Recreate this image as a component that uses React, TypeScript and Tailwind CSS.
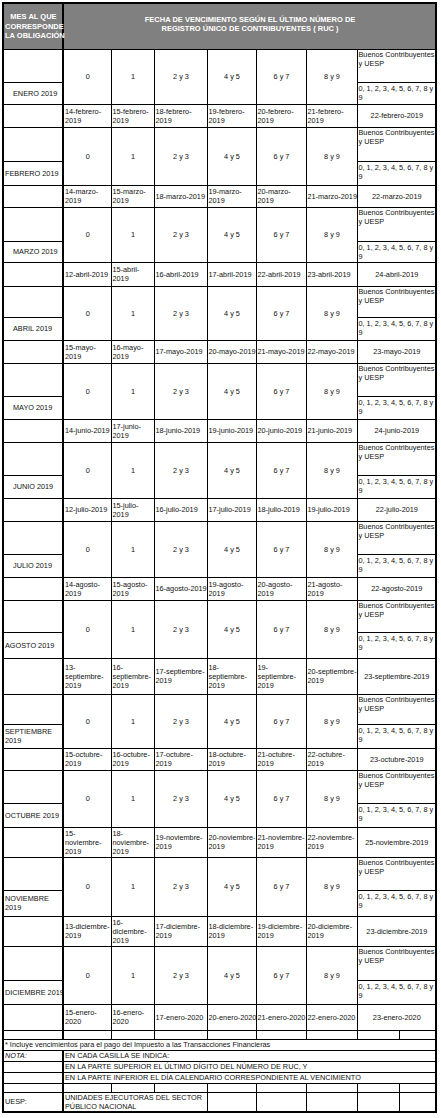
import React from "react";

type Month = {
  name: string;
  indent?: boolean;
  rows: [string, string, string];
  dates: string[];
  last: string;
};

// "|" marks where the reference breaks a line
const months: Month[] = [
  {
    name: "ENERO 2019",
    indent: true,
    rows: ["h-[33px]", "h-[22px]", "h-[23px]"],
    dates: ["14-febrero-|2019", "15-febrero-|2019", "18-febrero-|2019", "19-febrero-|2019", "20-febrero-|2019", "21-febrero-|2019"],
    last: "22-febrero-2019",
  },
  {
    name: "FEBRERO 2019",
    rows: ["h-[34px]", "h-[24px]", "h-[22px]"],
    dates: ["14-marzo-|2019", "15-marzo-|2019", "18-marzo-2019", "19-marzo-|2019", "20-marzo-|2019", "21-marzo-2019"],
    last: "22-marzo-2019",
  },
  {
    name: "MARZO 2019",
    indent: true,
    rows: ["h-[34px]", "h-[21px]", "h-[24px]"],
    dates: ["12-abril-2019", "15-abril-|2019", "16-abril-2019", "17-abril-2019", "22-abril-2019", "23-abril-2019"],
    last: "24-abril-2019",
  },
  {
    name: "ABRIL 2019",
    indent: true,
    rows: ["h-[31px]", "h-[23px]", "h-[23px]"],
    dates: ["15-mayo-|2019", "16-mayo-|2019", "17-mayo-2019", "20-mayo-2019", "21-mayo-2019", "22-mayo-2019"],
    last: "23-mayo-2019",
  },
  {
    name: "MAYO 2019",
    indent: true,
    rows: ["h-[33px]", "h-[23px]", "h-[23px]"],
    dates: ["14-junio-2019", "17-junio-|2019", "18-junio-2019", "19-junio-2019", "20-junio-2019", "21-junio-2019"],
    last: "24-junio-2019",
  },
  {
    name: "JUNIO 2019",
    indent: true,
    rows: ["h-[33px]", "h-[23px]", "h-[23px]"],
    dates: ["12-julio-2019", "15-julio-|2019", "16-julio-2019", "17-julio-2019", "18-julio-2019", "19-julio-2019"],
    last: "22-julio-2019",
  },
  {
    name: "JULIO 2019",
    indent: true,
    rows: ["h-[33px]", "h-[23px]", "h-[23px]"],
    dates: ["14-agosto-|2019", "15-agosto-|2019", "16-agosto-2019", "19-agosto-|2019", "20-agosto-|2019", "21-agosto-|2019"],
    last: "22-agosto-2019",
  },
  {
    name: "AGOSTO 2019",
    rows: ["h-[32px]", "h-[26px]", "h-[36px]"],
    dates: ["13-|septiembre-|2019", "16-|septiembre-|2019", "17-septiembre-|2019", "18-|septiembre-|2019", "19-|septiembre-|2019", "20-septiembre-|2019"],
    last: "23-septiembre-2019",
  },
  {
    name: "SEPTIEMBRE|2019",
    rows: ["h-[30px]", "h-[24px]", "h-[22px]"],
    dates: ["15-octubre-|2019", "16-octubre-|2019", "17-octubre-|2019", "18-octubre-|2019", "21-octubre-|2019", "22-octubre-|2019"],
    last: "23-octubre-2019",
  },
  {
    name: "OCTUBRE 2019",
    rows: ["h-[33px]", "h-[24px]", "h-[30px]"],
    dates: ["15-|noviembre-|2019", "18-|noviembre-|2019", "19-noviembre-|2019", "20-noviembre-|2019", "21-noviembre-|2019", "22-noviembre-|2019"],
    last: "25-noviembre-2019",
  },
  {
    name: "NOVIEMBRE|2019",
    rows: ["h-[33px]", "h-[26px]", "h-[30px]"],
    dates: ["13-diciembre-|2019", "16-|diciembre-|2019", "17-diciembre-|2019", "18-diciembre-|2019", "19-diciembre-|2019", "20-diciembre-|2019"],
    last: "23-diciembre-2019",
  },
  {
    name: "DICIEMBRE 2019",
    rows: ["h-[34px]", "h-[24px]", "h-[26px]"],
    dates: ["15-enero-|2020", "16-enero-|2020", "17-enero-2020", "20-enero-2020", "21-enero-2020", "22-enero-2020"],
    last: "23-enero-2020",
  },
];

const digits = ["0", "1", "2 y 3", "4 y 5", "6 y 7", "8 y 9"];
const widths = ["w-[60px]", "w-[48px]", "w-[43px]", "w-[53px]", "w-[49px]", "w-[50px]", "w-[51px]", "w-[42px]", "w-[37px]"];

const cell = "border border-black p-0 pl-[1px] align-middle";
const first = "border border-black border-r-2 p-0 pl-[1px] align-middle";

function Lines({ text }: { text: string }) {
  return (
    <>
      {text.split("|").map((p, i) => (
        <span key={i} className="block whitespace-nowrap">
          {p}
        </span>
      ))}
    </>
  );
}

function MonthBlock({ m }: { m: Month }) {
  return (
    <>
      <tr className={m.rows[0]}>
        <td className={first} />
        {digits.map((n) => (
          <td key={n} rowSpan={2} className={`${cell} text-center`}>
            {n}
          </td>
        ))}
        <td colSpan={2} className={`${cell} align-top`}>
          <Lines text="Buenos Contribuyentes|y UESP" />
        </td>
      </tr>
      <tr className={m.rows[1]}>
        <td className={`${first} ${m.indent ? "pl-[9px]" : ""}`}>
          <Lines text={m.name} />
        </td>
        <td colSpan={2} className={`${cell} align-top pt-[1px]`}>
          <Lines text="0, 1, 2, 3, 4, 5, 6, 7, 8 y|9" />
        </td>
      </tr>
      <tr className={m.rows[2]}>
        <td className={first} />
        {m.dates.map((d, i) => (
          <td key={i} className={cell}>
            <Lines text={d} />
          </td>
        ))}
        <td colSpan={2} className={`${cell} text-center`}>
          {m.last}
        </td>
      </tr>
    </>
  );
}

function EmptyRow({ h }: { h: string }) {
  return (
    <tr className={h}>
      <td className={first} />
      {widths.slice(1).map((_, i) => (
        <td key={i} className={cell} />
      ))}
    </tr>
  );
}

export default function App() {
  return (
    <div className="min-h-[1118px] bg-white pl-[2px] pt-[2px] font-['Liberation_Sans',Arial,sans-serif] text-[7.3px] leading-[9px] text-[#111]">
      <table className="w-[434px] table-fixed border-collapse border-2 border-black">
        <colgroup>
          {widths.map((w, i) => (
            <col key={i} className={w} />
          ))}
        </colgroup>
        <tbody>
          <tr className="h-[46px] bg-[#808080] text-[7.5px] font-bold text-white">
            <td className={`${first} text-center leading-[9.5px]`}>
              <Lines text="MES AL QUE|CORRESPONDE|LA OBLIGACIÓN" />
            </td>
            <td colSpan={8} className={`${cell} pb-[4px] text-center leading-[9.5px]`}>
              <Lines text="FECHA DE VENCIMIENTO SEGÚN EL ÚLTIMO NÚMERO DE|REGISTRO ÚNICO DE CONTRIBUYENTES ( RUC )" />
            </td>
          </tr>
          {months.map((m) => (
            <MonthBlock key={m.name} m={m} />
          ))}
          <EmptyRow h="h-[9px]" />
          <tr className="h-[11px]">
            <td colSpan={9} className={`${cell} whitespace-nowrap`}>
              * Incluye vencimientos para el pago del Impuesto a las Transacciones Financieras
            </td>
          </tr>
          <tr className="h-[11px]">
            <td className={`${first} italic`}>NOTA:</td>
            <td colSpan={8} className={cell}>
              EN CADA CASILLA SE INDICA:
            </td>
          </tr>
          <tr className="h-[11px]">
            <td className={first} />
            <td colSpan={8} className={cell}>
              EN LA PARTE SUPERIOR EL ÚLTIMO DÍGITO DEL NÚMERO DE RUC, Y
            </td>
          </tr>
          <tr className="h-[11px]">
            <td className={first} />
            <td colSpan={8} className={cell}>
              EN LA PARTE INFERIOR EL DÍA CALENDARIO CORRESPONDIENTE AL VENCIMIENTO
            </td>
          </tr>
          <EmptyRow h="h-[9px]" />
          <tr className="h-[19px]">
            <td className={first}>UESP:</td>
            <td colSpan={3} className={cell}>
              <Lines text="UNIDADES EJECUTORAS DEL SECTOR|PÚBLICO NACIONAL" />
            </td>
            <td className={cell} />
            <td className={cell} />
            <td className={cell} />
            <td className={cell} />
            <td className={cell} />
          </tr>
        </tbody>
      </table>
    </div>
  );
}
